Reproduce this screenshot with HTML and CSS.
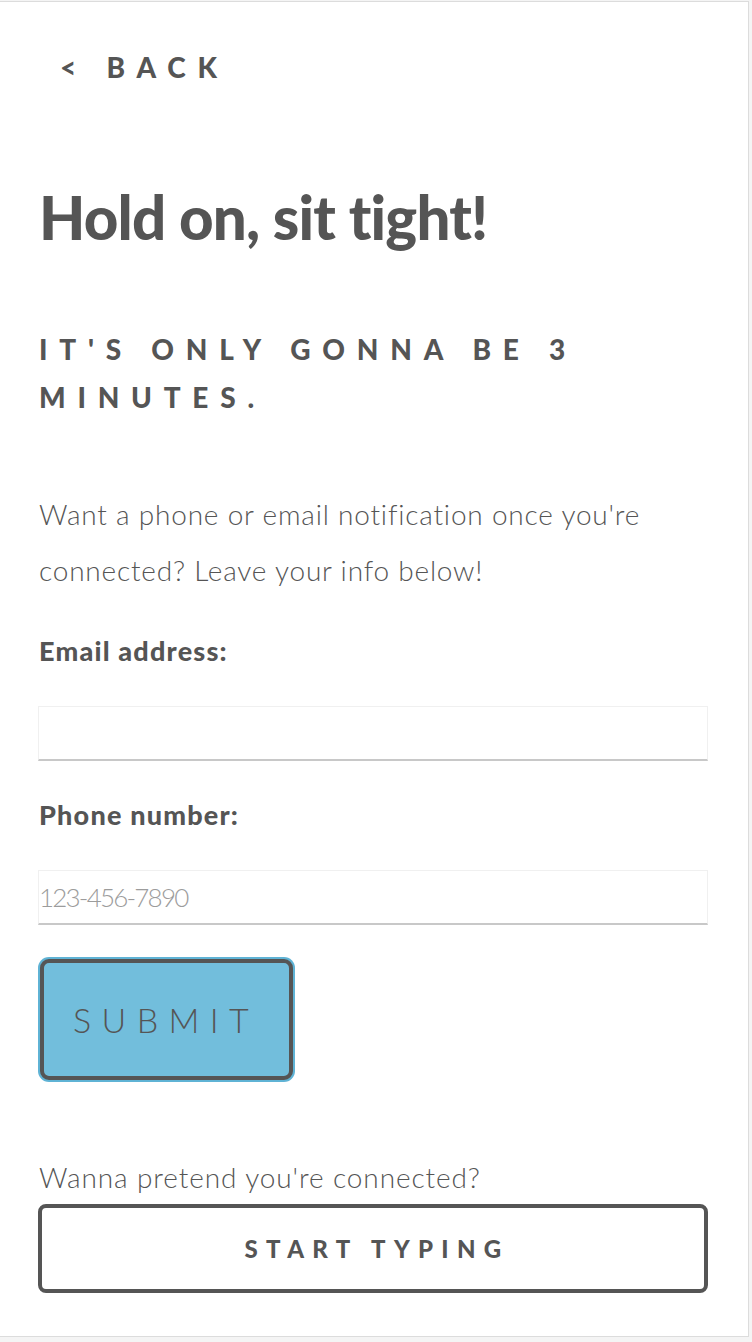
FILE: index.html
```html
<!DOCTYPE html>
<html lang="en">
<head>
<meta charset="utf-8">
<title>Hold on, sit tight!</title>
<link rel="stylesheet" href="styles.css">
</head>
<body>
<div class="frame">
  <a class="back" href="#">&lt; Back</a>
  <h1 class="title">Hold on, sit tight!</h1>
  <h2 class="subtitle">It's only gonna be 3 minutes.</h2>
  <p class="lead">Want a phone or email notification once you're connected? Leave your info below!</p>
  <form class="notify">
    <label class="field-label" for="email">Email address:</label>
    <input class="field" id="email" type="email">
    <label class="field-label field-label-next" for="phone">Phone number:</label>
    <input class="field" id="phone" type="tel" placeholder="123-456-7890">
    <button class="submit" type="button">Submit</button>
  </form>
  <p class="pretend">Wanna pretend you're connected?</p>
  <button class="start" type="button">Start typing</button>
</div>
</body>
</html>
```
FILE: styles.css
```css
html, body {
  margin: 0;
  padding: 0;
}
body {
  background: #f4f4f4;
  padding-top: 1px;
  font-family: Lato, "Liberation Sans", sans-serif;
  color: #555;
}
.frame {
  box-sizing: border-box;
  width: 749px;
  height: 1336px;
  background: #fff;
  border: 1px solid #dcdcdc;
  border-left: none;
  padding: 51px 40px 0 39px;
  display: flex;
  flex-direction: column;
  align-items: flex-start;
}
.back {
  display: block;
  margin-left: 21px;
  font-size: 28px;
  line-height: 28px;
  font-weight: 900;
  letter-spacing: 0.42em;
  text-transform: uppercase;
  color: #555;
  text-decoration: none;
}
.title {
  margin: 106px 0 0;
  font-size: 60px;
  line-height: 60px;
  font-weight: 900;
  letter-spacing: -0.8px;
}
.subtitle {
  margin: 78px 0 0;
  font-size: 28px;
  line-height: 48px;
  font-weight: 900;
  letter-spacing: 0.42em;
  text-transform: uppercase;
}
.lead {
  margin: 65px 0 0;
  font-size: 28px;
  line-height: 56px;
  font-weight: 300;
  letter-spacing: 0.8px;
}
.notify {
  align-self: stretch;
  display: flex;
  flex-direction: column;
  align-items: flex-start;
}
.field-label {
  display: block;
  margin-top: 39px;
  font-size: 27px;
  line-height: 28px;
  font-weight: 900;
  letter-spacing: 1.2px;
}
.field-label-next {
  margin-top: 40px;
}
.field {
  box-sizing: border-box;
  align-self: stretch;
  height: 55px;
  margin: 41px 0 0 -1px;
  padding: 0;
  border: 1px solid #f0f0f0;
  border-bottom: 2px solid #c8c8c8;
  font-family: Lato, "Liberation Sans", sans-serif;
  font-size: 26px;
  font-weight: 300;
  letter-spacing: -1.8px;
  color: #555;
  background: #fff;
  outline: none;
}
.field::placeholder {
  color: #9c9c9c;
}
.submit {
  box-sizing: border-box;
  width: 253px;
  height: 121px;
  margin: 34px 0 0 1px;
  padding: 0 0 0 29px;
  text-align: left;
  background: #72bedc;
  border: 4px solid #555;
  border-radius: 9px;
  box-shadow: 0 0 0 2px #5fb3d5;
  font-family: Lato, "Liberation Sans", sans-serif;
  font-size: 34px;
  font-weight: 300;
  letter-spacing: 10.4px;
  text-transform: uppercase;
  color: #555;
}
.pretend {
  margin: 83px 0 0;
  font-size: 28px;
  line-height: 28px;
  font-weight: 300;
  letter-spacing: 0.9px;
}
.start {
  box-sizing: border-box;
  align-self: stretch;
  height: 89px;
  margin: 13px 0 0 -1px;
  padding: 0 0 0 8px;
  background: #fff;
  border: 4px solid #555;
  border-radius: 8px;
  font-family: Lato, "Liberation Sans", sans-serif;
  font-size: 24px;
  font-weight: 900;
  letter-spacing: 8.3px;
  text-transform: uppercase;
  color: #555;
}
```
